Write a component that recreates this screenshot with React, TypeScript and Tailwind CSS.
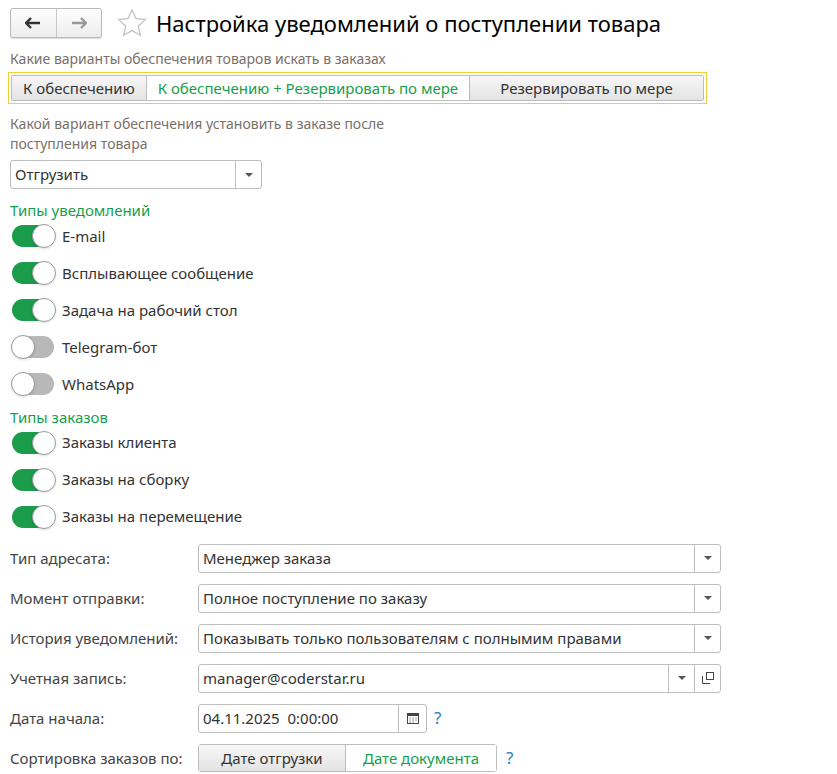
import React from "react";

const green = "text-[#16a04b]";

function Toggle({ on }: { on: boolean }) {
  return (
    <div className={`relative w-[42px] h-[22px] rounded-full ${on ? "bg-[#1a9c4a]" : "bg-[#b8b8b8]"} shrink-0`}>
      <div className={`absolute top-[-1px] ${on ? "left-[20px]" : "left-[-1px]"} w-[24px] h-[24px] rounded-full bg-white border border-[#9a9a9a] shadow-sm`} />
    </div>
  );
}

function ToggleRow({ on, label }: { on: boolean; label: string }) {
  return (
    <div className="flex items-center gap-[8px] h-[37px] pl-[12px]">
      <Toggle on={on} />
      <span className="text-[15px] text-[#333]">{label}</span>
    </div>
  );
}

function Arrow() {
  return (
    <div className="w-[26px] flex items-center justify-center border-l border-[#bdbdbd] self-stretch">
      <div className="w-0 h-0 border-l-[4px] border-r-[4px] border-t-[4px] border-l-transparent border-r-transparent border-t-[#555]" />
    </div>
  );
}

function Select({ value, extra }: { value: string; extra?: boolean }) {
  return (
    <div className="flex-1 flex h-[29px] border border-[#bdbdbd] rounded-[3px] bg-white">
      <div className="flex-1 px-[4px] flex items-center text-[15px] text-[#333]">{value}</div>
      <Arrow />
      {extra && (
        <div className="w-[26px] flex items-center justify-center border-l border-[#bdbdbd]">
          <svg width="12" height="12" viewBox="0 0 12 12" fill="none" stroke="#444" strokeWidth="1">
            <rect x="4.5" y="0.5" width="7" height="7" />
            <path d="M0.5 4v7.5H8" />
          </svg>
        </div>
      )}
    </div>
  );
}

function Row({ label, children }: { label: string; children: React.ReactNode }) {
  return (
    <div className="flex items-center h-[40px] w-[711px]">
      <div className="w-[188px] text-[15px] text-[#444]">{label}</div>
      {children}
    </div>
  );
}

export default function App() {
  return (
    <div className="w-[837px] h-[774px] bg-white pl-[10px] pt-[8px] font-['Liberation_Sans',Arial,sans-serif] overflow-hidden">
      <div className="flex items-center h-[30px]">
        <div className="flex h-[30px] w-[92px] border border-[#b9b9b9] rounded-[3px] bg-gradient-to-b from-white to-[#ececec] shadow-[0_1px_1px_rgba(0,0,0,0.15)]">
          <div className="flex-1 flex items-center justify-center border-r border-[#c8c8c8]">
            <svg width="16" height="12" viewBox="0 0 16 12"><path d="M1 6h14M6 1L1 6l5 5" stroke="#333" strokeWidth="2.4" fill="none" /></svg>
          </div>
          <div className="flex-1 flex items-center justify-center">
            <svg width="16" height="12" viewBox="0 0 16 12"><path d="M1 6h14M10 1l5 5-5 5" stroke="#999" strokeWidth="2.4" fill="none" /></svg>
          </div>
        </div>
        <svg className="ml-[14px]" width="32" height="30" viewBox="0 0 24 23">
          <path d="M12 1.5l3.1 6.6 7.2.8-5.4 4.9 1.5 7.1L12 17.3l-6.4 3.6 1.5-7.1-5.4-4.9 7.2-.8z" fill="none" stroke="#c4c4c4" strokeWidth="1" />
        </svg>
        <h1 className="ml-[8px] text-[22px] text-black">Настройка уведомлений о поступлении товара</h1>
      </div>

      <div className="mt-[10px] text-[14px] text-[#7a7068]">Какие варианты обеспечения товаров искать в заказах</div>
      <div className="mt-[3px] -ml-[2px] w-[699px] border border-[#f2cd3c] p-[2px]">
        <div className="flex h-[26px] text-[15px] border border-[#bdbdbd] rounded-[2px]">
          <div className="px-[11px] flex items-center bg-gradient-to-b from-[#f7f7f7] to-[#e3e3e3] text-[#333] border-r border-[#bdbdbd]">К обеспечению</div>
          <div className={`px-[11px] flex items-center bg-white ${green} border-r border-[#bdbdbd]`}>К обеспечению + Резервировать по мере</div>
          <div className="flex-1 flex items-center justify-center bg-gradient-to-b from-[#f7f7f7] to-[#e3e3e3] text-[#333]">Резервировать по мере</div>
        </div>
      </div>

      <div className="mt-[10px] text-[14px] leading-[20px] text-[#7a7068] w-[440px]">Какой вариант обеспечения установить в заказе после поступления товара</div>
      <div className="mt-[6px] w-[252px] flex">
        <Select value="Отгрузить" />
      </div>

      <div className={`mt-[10px] text-[15px] ${green}`}>Типы уведомлений</div>
      <div className="-ml-[10px] -mt-[4px]">
        <ToggleRow on label="E-mail" />
        <ToggleRow on label="Всплывающее сообщение" />
        <ToggleRow on label="Задача на рабочий стол" />
        <ToggleRow on={false} label="Telegram-бот" />
        <ToggleRow on={false} label="WhatsApp" />
      </div>
      <div className={`mt-[3px] text-[15px] ${green}`}>Типы заказов</div>
      <div className="-ml-[10px] -mt-[4px]">
        <ToggleRow on label="Заказы клиента" />
        <ToggleRow on label="Заказы на сборку" />
        <ToggleRow on label="Заказы на перемещение" />
      </div>

      <div className="mt-[3px]">
        <Row label="Тип адресата:"><Select value="Менеджер заказа" /></Row>
        <Row label="Момент отправки:"><Select value="Полное поступление по заказу" /></Row>
        <Row label="История уведомлений:"><Select value="Показывать только пользователям с полнымим правами" /></Row>
        <Row label="Учетная запись:"><Select value="manager@coderstar.ru" extra /></Row>
        <Row label="Дата начала:">
          <div className="flex h-[29px] w-[229px] border border-[#bdbdbd] rounded-[3px]">
            <div className="flex-1 px-[4px] flex items-center text-[15px] text-[#333] whitespace-pre">04.11.2025  0:00:00</div>
            <div className="w-[28px] flex items-center justify-center border-l border-[#bdbdbd]">
              <svg width="12" height="12" viewBox="0 0 12 12">
                <rect x="0.5" y="1.5" width="11" height="10" fill="none" stroke="#444" />
                <rect x="0.5" y="1.5" width="11" height="2.5" fill="#444" />
                <path d="M2.5 6h1M5.5 6h1M8.5 6h1M2.5 8h1M5.5 8h1M8.5 8h1M2.5 10h1M5.5 10h1" stroke="#444" />
              </svg>
            </div>
          </div>
          <span className="ml-[7px] text-[17px] text-[#2a7bc0]">?</span>
        </Row>
        <Row label="Сортировка заказов по:">
          <div className="flex h-[28px] text-[15px] border border-[#bdbdbd] rounded-[3px]">
            <div className="w-[147px] flex items-center justify-center bg-gradient-to-b from-[#f7f7f7] to-[#e3e3e3] text-[#333] border-r border-[#bdbdbd]">Дате отгрузки</div>
            <div className={`w-[150px] flex items-center justify-center bg-white ${green}`}>Дате документа</div>
          </div>
          <span className="ml-[9px] text-[17px] text-[#2a7bc0]">?</span>
        </Row>
      </div>
    </div>
  );
}
